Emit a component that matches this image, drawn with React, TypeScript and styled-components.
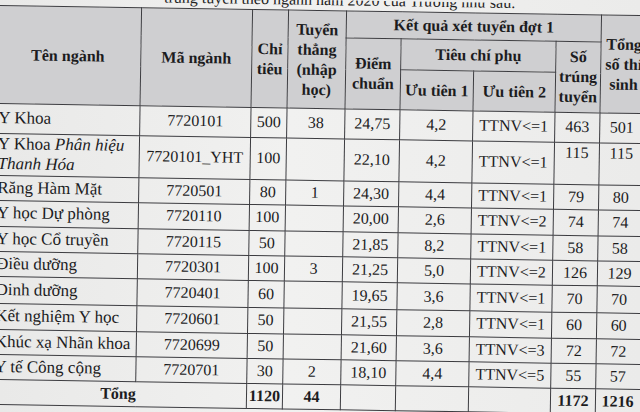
import React from "react";
import styled, { createGlobalStyle } from "styled-components";

const GlobalStyle = createGlobalStyle`
  html, body {
    margin: 0;
    padding: 0;
    background: #eeeeed;
    overflow: hidden;
  }
  body {
    width: 640px;
    height: 412px;
    font-family: "Liberation Serif", "Times New Roman", serif;
    color: #1c1c1e;
  }
`;

const Page = styled.div`
  width: 640px;
  height: 412px;
  overflow: hidden;
  position: relative;
  background: linear-gradient(90deg, #e9e9e8 0%, #f1f1f0 45%, #ebebea 100%);
`;

const Sheet = styled.div`
  transform: rotate(0.9deg);
  transform-origin: 320px 206px;
`;

const Caption = styled.div`
  height: 10px;
  overflow: hidden;
  display: flex;
  justify-content: flex-end;
  padding-right: 128px;
`;

const CaptionText = styled.span`
  font-size: 16px;
  line-height: 16px;
  margin-top: -8px;
  white-space: nowrap;
  color: #222;
`;

const Table = styled.table`
  border-collapse: collapse;
  table-layout: fixed;
  width: 666px;
  margin-left: -8px;
  font-size: 16px;

  td, th {
    border: 1.5px solid #3c3c40;
    padding: 0;
    overflow: hidden;
    white-space: nowrap;
  }
`;

const Head = styled.th<{ $h?: number; $last?: boolean }>`
  background: #cfcfd1;
  font-weight: bold;
  text-align: center;
  vertical-align: middle;
  line-height: 20px;
  height: ${(p) => (p.$h ? `${p.$h}px` : "auto")};
  && {
    padding-right: ${(p) => (p.$last ? "14px" : "0")};
  }
`;

const Cell = styled.td<{ $align?: string; $top?: boolean; $bold?: boolean; $last?: boolean }>`
  background: transparent;
  text-align: ${(p) => p.$align || "center"};
  vertical-align: ${(p) => (p.$top ? "top" : "middle")};
  font-size: ${(p) => (p.$align === "left" ? "17px" : "16px")};
  font-weight: ${(p) => (p.$bold ? "bold" : "normal")};
  line-height: 20px;
  && {
    padding: 0 ${(p) => (p.$last ? "16px" : "0")} 1px
      ${(p) => (p.$align === "left" ? "4px" : "0")};
  }
`;

const Row = styled.tr<{ $h: number }>`
  height: ${(p) => p.$h}px;
`;

type Item = {
  name: React.ReactNode;
  code: string;
  quota: string;
  direct: string;
  score: string;
  p1: string;
  p2: string;
  passed: string;
  total: string;
  h: number;
  topRight?: boolean;
};

const rows: Item[] = [
  { name: "Y Khoa", code: "7720101", quota: "500", direct: "38", score: "24,75", p1: "4,2", p2: "TTNV<=1", passed: "463", total: "501", h: 30 },
  {
    name: (
      <>
        Y Khoa <i>Phân hiệu</i>
        <br />
        <i>Thanh Hóa</i>
      </>
    ),
    code: "7720101_YHT",
    quota: "100",
    direct: "",
    score: "22,10",
    p1: "4,2",
    p2: "TTNV<=1",
    passed: "115",
    total: "115",
    h: 42,
    topRight: true,
  },
  { name: "Răng Hàm Mặt", code: "7720501", quota: "80", direct: "1", score: "24,30", p1: "4,4", p2: "TTNV<=1", passed: "79", total: "80", h: 25 },
  { name: "Y học Dự phòng", code: "7720110", quota: "100", direct: "", score: "20,00", p1: "2,6", p2: "TTNV<=2", passed: "74", total: "74", h: 26 },
  { name: "Y học Cổ truyền", code: "7720115", quota: "50", direct: "", score: "21,85", p1: "8,2", p2: "TTNV<=1", passed: "58", total: "58", h: 25 },
  { name: "Điều dưỡng", code: "7720301", quota: "100", direct: "3", score: "21,25", p1: "5,0", p2: "TTNV<=2", passed: "126", total: "129", h: 25 },
  { name: "Dinh dưỡng", code: "7720401", quota: "60", direct: "", score: "19,65", p1: "3,6", p2: "TTNV<=1", passed: "70", total: "70", h: 27 },
  { name: "Kết nghiệm Y học", code: "7720601", quota: "50", direct: "", score: "21,55", p1: "2,8", p2: "TTNV<=1", passed: "60", total: "60", h: 26 },
  { name: "Khúc xạ Nhãn khoa", code: "7720699", quota: "50", direct: "", score: "21,60", p1: "3,6", p2: "TTNV<=3", passed: "72", total: "72", h: 25 },
  { name: "Y tế Công cộng", code: "7720701", quota: "30", direct: "2", score: "18,10", p1: "4,4", p2: "TTNV<=5", passed: "55", total: "57", h: 25 },
];

export default function App() {
  return (
    <Page>
      <GlobalStyle />
      <Sheet>
        <Caption>
          <CaptionText>trúng tuyển theo ngành năm 2020 của Trường như sau.</CaptionText>
        </Caption>
        <Table>
          <colgroup>
            <col style={{ width: 146 }} />
            <col style={{ width: 111 }} />
            <col style={{ width: 36 }} />
            <col style={{ width: 58 }} />
            <col style={{ width: 55 }} />
            <col style={{ width: 73 }} />
            <col style={{ width: 82 }} />
            <col style={{ width: 45 }} />
            <col style={{ width: 60 }} />
          </colgroup>
          <thead>
            <tr>
              <Head rowSpan={3}>Tên ngành</Head>
              <Head rowSpan={3}>Mã ngành</Head>
              <Head rowSpan={3}>
                Chỉ
                <br />
                tiêu
              </Head>
              <Head rowSpan={3}>
                Tuyển
                <br />
                thẳng
                <br />
                (nhập
                <br />
                học)
              </Head>
              <Head colSpan={4} $h={26}>
                Kết quả xét tuyển đợt 1
              </Head>
              <Head rowSpan={3} $last>
                Tổng
                <br />
                số thí
                <br />
                sinh
              </Head>
            </tr>
            <tr>
              <Head rowSpan={2}>
                Điểm
                <br />
                chuẩn
              </Head>
              <Head colSpan={2} $h={30}>
                Tiêu chí phụ
              </Head>
              <Head rowSpan={2}>
                Số
                <br />
                trúng
                <br />
                tuyển
              </Head>
            </tr>
            <tr>
              <Head $h={39}>Ưu tiên 1</Head>
              <Head $h={39}>Ưu tiên 2</Head>
            </tr>
          </thead>
          <tbody>
            {rows.map((r) => (
              <Row key={r.code} $h={r.h}>
                <Cell $align="left">{r.name}</Cell>
                <Cell>{r.code}</Cell>
                <Cell>{r.quota}</Cell>
                <Cell>{r.direct}</Cell>
                <Cell>{r.score}</Cell>
                <Cell>{r.p1}</Cell>
                <Cell>{r.p2}</Cell>
                <Cell $top={r.topRight}>{r.passed}</Cell>
                <Cell $top={r.topRight} $last>
                  {r.total}
                </Cell>
              </Row>
            ))}
            <Row $h={25}>
              <Cell colSpan={2} $bold>
                Tổng
              </Cell>
              <Cell $bold>1120</Cell>
              <Cell $bold>44</Cell>
              <Cell />
              <Cell />
              <Cell />
              <Cell $bold>1172</Cell>
              <Cell $bold $last>
                1216
              </Cell>
            </Row>
          </tbody>
        </Table>
      </Sheet>
    </Page>
  );
}
